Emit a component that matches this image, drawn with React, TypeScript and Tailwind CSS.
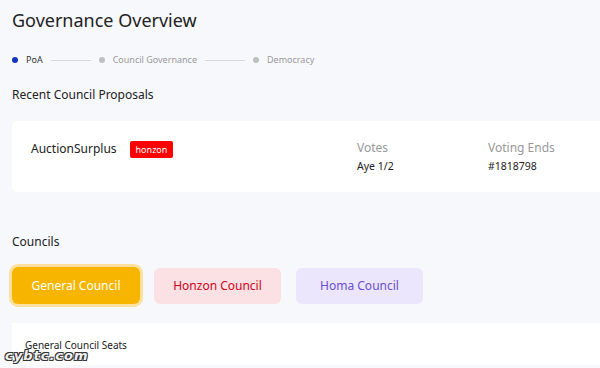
import React from "react";

export default function App() {
  const font = { fontFamily: '"Noto Sans", "Open Sans", sans-serif' };
  return (
    <div className="relative w-[600px] h-[368px] overflow-hidden bg-[#f7f8fc] text-[#222]" style={font}>
      <div className="pl-3 pt-[6px]">
        <h1 className="text-[18px] leading-[28px] text-[#222] font-normal">Governance Overview</h1>
        <div className="mt-[19px] flex items-center h-[14px] text-[9px] text-[#999]">
          <span className="w-[6px] h-[6px] rounded-full bg-[#1732c0]" />
          <span className="ml-[8px] text-[#333]">PoA</span>
          <span className="ml-[8px] w-[40px] h-px bg-[#d9d9d9]" />
          <span className="ml-[8px] w-[6px] h-[6px] rounded-full bg-[#bfbfbf]" />
          <span className="ml-[8px]">Council Governance</span>
          <span className="ml-[8px] w-[40px] h-px bg-[#d9d9d9]" />
          <span className="ml-[8px] w-[6px] h-[6px] rounded-full bg-[#bfbfbf]" />
          <span className="ml-[8px]">Democracy</span>
        </div>
        <h2 className="mt-[18px] text-[12px] leading-[20px]">Recent Council Proposals</h2>
        <div className="mt-[16px] w-[600px] h-[71px] bg-white rounded-l-[6px] flex pt-[18px] pl-[19px]">
          <div className="w-[326px] flex items-start">
            <span className="text-[12px] leading-[20px]">AuctionSurplus</span>
            <span className="ml-[13px] mt-[2px] h-[17px] px-[6px] bg-[#f00] rounded-[2px] text-white text-[9px] leading-[17px]">honzon</span>
          </div>
          <div className="w-[131px]">
            <div className="text-[12px] leading-[17px] text-[#999]">Votes</div>
            <div className="mt-[2px] text-[10.5px] leading-[16px] text-[#222]">Aye 1/2</div>
          </div>
          <div>
            <div className="text-[12px] leading-[17px] text-[#999]">Voting Ends</div>
            <div className="mt-[2px] text-[10.5px] leading-[16px] text-[#222]">#1818798</div>
          </div>
        </div>
        <h2 className="mt-[41px] text-[12px] leading-[18px]">Councils</h2>
        <div className="mt-[16px] flex items-center gap-[14px]">
          <button className="w-[128px] h-[37px] rounded-[6px] bg-[#f7b500] text-white text-[12px] ring-[3px] ring-[#fbe0a0]">General Council</button>
          <button className="w-[127px] h-[36px] rounded-[6px] bg-[#fbe1e4] text-[#d0021b] text-[12px]">Honzon Council</button>
          <button className="ml-px w-[127px] h-[36px] rounded-[6px] bg-[#ebe6fb] text-[#6a4fd6] text-[12px]">Homa Council</button>
        </div>
        <div className="mt-[19px] w-[600px] h-[42px] bg-white pl-[13px] pt-[14px]">
          <div className="text-[10px] leading-[16px] text-[#222]">General Council Seats</div>
        </div>
      </div>
      <div
        className="absolute left-[5px] top-[348px] text-[13px] leading-[16px] font-bold italic tracking-[1px] text-[#f0f0f0]"
        style={{ fontFamily: '"DejaVu Sans", sans-serif', textShadow: "1px 1px 0 #333, -1px -1px 0 #333, 1px -1px 0 #333, -1px 1px 0 #333" }}
      >
        cybtc.com
      </div>
    </div>
  );
}
